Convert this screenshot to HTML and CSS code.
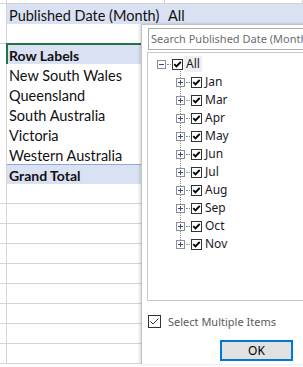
FILE: index.html
```html
<!DOCTYPE html>
<html>
<head>
<meta charset="utf-8">
<link rel="stylesheet" href="styles.css">
</head>
<body>
<div class="sheet">
  <div class="row r0"><div class="c a"></div><div class="c b"></div><div class="c cc"></div></div>
  <div class="row band"><div class="c a"></div><div class="c b">Published Date (Month)</div><div class="c cc">All</div></div>
  <div class="row pv"><div class="c a"></div><div class="c b"></div><div class="c cc"></div></div>
  <div class="row pv head"><div class="c a"></div><div class="c b sel">Row Labels</div><div class="c cc"></div></div>
  <div class="row pv"><div class="c a"></div><div class="c b">New South Wales</div><div class="c cc"></div></div>
  <div class="row pv"><div class="c a"></div><div class="c b">Queensland</div><div class="c cc"></div></div>
  <div class="row pv"><div class="c a"></div><div class="c b">South Australia</div><div class="c cc"></div></div>
  <div class="row pv"><div class="c a"></div><div class="c b">Victoria</div><div class="c cc"></div></div>
  <div class="row pv"><div class="c a"></div><div class="c b">Western Australia</div><div class="c cc"></div></div>
  <div class="row pv total"><div class="c a"></div><div class="c b">Grand Total</div><div class="c cc"></div></div>
  <div class="row"><div class="c a"></div><div class="c b"></div><div class="c cc"></div></div>
  <div class="row"><div class="c a"></div><div class="c b"></div><div class="c cc"></div></div>
  <div class="row"><div class="c a"></div><div class="c b"></div><div class="c cc"></div></div>
  <div class="row"><div class="c a"></div><div class="c b"></div><div class="c cc"></div></div>
  <div class="row"><div class="c a"></div><div class="c b"></div><div class="c cc"></div></div>
  <div class="row"><div class="c a"></div><div class="c b"></div><div class="c cc"></div></div>
  <div class="row"><div class="c a"></div><div class="c b"></div><div class="c cc"></div></div>
  <div class="row"><div class="c a"></div><div class="c b"></div><div class="c cc"></div></div>
  <div class="row"><div class="c a"></div><div class="c b"></div><div class="c cc"></div></div>
</div>

<div class="popup">
  <div class="search">Search Published Date (Month)</div>
  <div class="tree">
    <div class="node root">
      <svg class="exp" width="9" height="9" viewBox="0 0 9 9"><rect x="0.5" y="0.5" width="8" height="8" fill="#fff" stroke="#8f8f8f"/><path d="M2 4.5H7" stroke="#2b4d9c" stroke-width="1"/></svg>
      <span class="dash"></span>
      <svg class="cb" width="11" height="11" viewBox="0 0 11 11"><rect x="0.5" y="0.5" width="10" height="10" fill="#fff" stroke="#333"/><path d="M2.3 5.2L4.4 7.4L8.7 3" fill="none" stroke="#000" stroke-width="1.8"/></svg>
      <span class="label focus">All</span>
    </div>
    <div class="children">
      <div class="node"><svg class="exp" width="9" height="9" viewBox="0 0 9 9"><rect x="0.5" y="0.5" width="8" height="8" fill="#fff" stroke="#8f8f8f"/><path d="M2 4.5H7M4.5 2V7" stroke="#2b4d9c" stroke-width="1"/></svg><span class="dash"></span><svg class="cb" width="11" height="11" viewBox="0 0 11 11"><rect x="0.5" y="0.5" width="10" height="10" fill="#fff" stroke="#333"/><path d="M2.3 5.2L4.4 7.4L8.7 3" fill="none" stroke="#000" stroke-width="1.8"/></svg><span class="label">Jan</span></div>
      <div class="node"><svg class="exp" width="9" height="9" viewBox="0 0 9 9"><rect x="0.5" y="0.5" width="8" height="8" fill="#fff" stroke="#8f8f8f"/><path d="M2 4.5H7M4.5 2V7" stroke="#2b4d9c" stroke-width="1"/></svg><span class="dash"></span><svg class="cb" width="11" height="11" viewBox="0 0 11 11"><rect x="0.5" y="0.5" width="10" height="10" fill="#fff" stroke="#333"/><path d="M2.3 5.2L4.4 7.4L8.7 3" fill="none" stroke="#000" stroke-width="1.8"/></svg><span class="label">Mar</span></div>
      <div class="node"><svg class="exp" width="9" height="9" viewBox="0 0 9 9"><rect x="0.5" y="0.5" width="8" height="8" fill="#fff" stroke="#8f8f8f"/><path d="M2 4.5H7M4.5 2V7" stroke="#2b4d9c" stroke-width="1"/></svg><span class="dash"></span><svg class="cb" width="11" height="11" viewBox="0 0 11 11"><rect x="0.5" y="0.5" width="10" height="10" fill="#fff" stroke="#333"/><path d="M2.3 5.2L4.4 7.4L8.7 3" fill="none" stroke="#000" stroke-width="1.8"/></svg><span class="label">Apr</span></div>
      <div class="node"><svg class="exp" width="9" height="9" viewBox="0 0 9 9"><rect x="0.5" y="0.5" width="8" height="8" fill="#fff" stroke="#8f8f8f"/><path d="M2 4.5H7M4.5 2V7" stroke="#2b4d9c" stroke-width="1"/></svg><span class="dash"></span><svg class="cb" width="11" height="11" viewBox="0 0 11 11"><rect x="0.5" y="0.5" width="10" height="10" fill="#fff" stroke="#333"/><path d="M2.3 5.2L4.4 7.4L8.7 3" fill="none" stroke="#000" stroke-width="1.8"/></svg><span class="label">May</span></div>
      <div class="node"><svg class="exp" width="9" height="9" viewBox="0 0 9 9"><rect x="0.5" y="0.5" width="8" height="8" fill="#fff" stroke="#8f8f8f"/><path d="M2 4.5H7M4.5 2V7" stroke="#2b4d9c" stroke-width="1"/></svg><span class="dash"></span><svg class="cb" width="11" height="11" viewBox="0 0 11 11"><rect x="0.5" y="0.5" width="10" height="10" fill="#fff" stroke="#333"/><path d="M2.3 5.2L4.4 7.4L8.7 3" fill="none" stroke="#000" stroke-width="1.8"/></svg><span class="label">Jun</span></div>
      <div class="node"><svg class="exp" width="9" height="9" viewBox="0 0 9 9"><rect x="0.5" y="0.5" width="8" height="8" fill="#fff" stroke="#8f8f8f"/><path d="M2 4.5H7M4.5 2V7" stroke="#2b4d9c" stroke-width="1"/></svg><span class="dash"></span><svg class="cb" width="11" height="11" viewBox="0 0 11 11"><rect x="0.5" y="0.5" width="10" height="10" fill="#fff" stroke="#333"/><path d="M2.3 5.2L4.4 7.4L8.7 3" fill="none" stroke="#000" stroke-width="1.8"/></svg><span class="label">Jul</span></div>
      <div class="node"><svg class="exp" width="9" height="9" viewBox="0 0 9 9"><rect x="0.5" y="0.5" width="8" height="8" fill="#fff" stroke="#8f8f8f"/><path d="M2 4.5H7M4.5 2V7" stroke="#2b4d9c" stroke-width="1"/></svg><span class="dash"></span><svg class="cb" width="11" height="11" viewBox="0 0 11 11"><rect x="0.5" y="0.5" width="10" height="10" fill="#fff" stroke="#333"/><path d="M2.3 5.2L4.4 7.4L8.7 3" fill="none" stroke="#000" stroke-width="1.8"/></svg><span class="label">Aug</span></div>
      <div class="node"><svg class="exp" width="9" height="9" viewBox="0 0 9 9"><rect x="0.5" y="0.5" width="8" height="8" fill="#fff" stroke="#8f8f8f"/><path d="M2 4.5H7M4.5 2V7" stroke="#2b4d9c" stroke-width="1"/></svg><span class="dash"></span><svg class="cb" width="11" height="11" viewBox="0 0 11 11"><rect x="0.5" y="0.5" width="10" height="10" fill="#fff" stroke="#333"/><path d="M2.3 5.2L4.4 7.4L8.7 3" fill="none" stroke="#000" stroke-width="1.8"/></svg><span class="label">Sep</span></div>
      <div class="node"><svg class="exp" width="9" height="9" viewBox="0 0 9 9"><rect x="0.5" y="0.5" width="8" height="8" fill="#fff" stroke="#8f8f8f"/><path d="M2 4.5H7M4.5 2V7" stroke="#2b4d9c" stroke-width="1"/></svg><span class="dash"></span><svg class="cb" width="11" height="11" viewBox="0 0 11 11"><rect x="0.5" y="0.5" width="10" height="10" fill="#fff" stroke="#333"/><path d="M2.3 5.2L4.4 7.4L8.7 3" fill="none" stroke="#000" stroke-width="1.8"/></svg><span class="label">Oct</span></div>
      <div class="node"><svg class="exp" width="9" height="9" viewBox="0 0 9 9"><rect x="0.5" y="0.5" width="8" height="8" fill="#fff" stroke="#8f8f8f"/><path d="M2 4.5H7M4.5 2V7" stroke="#2b4d9c" stroke-width="1"/></svg><span class="dash"></span><svg class="cb" width="11" height="11" viewBox="0 0 11 11"><rect x="0.5" y="0.5" width="10" height="10" fill="#fff" stroke="#333"/><path d="M2.3 5.2L4.4 7.4L8.7 3" fill="none" stroke="#000" stroke-width="1.8"/></svg><span class="label">Nov</span></div>
    </div>
  </div>
  <div class="multi">
    <svg class="mcb" width="13" height="13" viewBox="0 0 13 13"><rect x="0.5" y="0.5" width="12" height="12" fill="#fff" stroke="#333"/><path d="M2.5 6.5L5 9L10.5 3.5" fill="none" stroke="#333" stroke-width="1"/></svg>
    <span class="mlabel">Select Multiple Items</span>
  </div>
  <div class="footer"><button class="ok">OK</button></div>
</div>
</body>
</html>
```

FILE: styles.css
```css
html, body {
  margin: 0;
  padding: 0;
  background: #fff;
  overflow: hidden;
  width: 303px;
  height: 367px;
}

.sheet {
  font-family: Lato, "Liberation Sans", sans-serif;
  font-size: 14.5px;
  color: #111;
}

.row {
  display: grid;
  grid-template-columns: 7px 158px 1fr;
  height: 20px;
}

.r0 {
  height: 4px;
}

.c {
  box-sizing: border-box;
  border-right: 1px solid #d4d4d4;
  border-bottom: 1px solid #d4d4d4;
  padding: 2px 0 0 2px;
  line-height: 19px;
  white-space: nowrap;
  background: #fff;
}

.a,
.r0 .c {
  padding: 0;
}

.band .b,
.band .cc {
  background: #d9e1f2;
  border-color: #d9e1f2;
}

.band .cc {
  padding-left: 3px;
}

.pv .b {
  border-bottom-color: #fff;
  border-right-color: #fff;
}

.head .b,
.total .b {
  background: #d9e1f2;
  font-weight: bold;
  font-size: 14px;
}

.head .b {
  border-bottom-color: #d9e1f2;
}

.sel {
  outline: 2px solid #217346;
  outline-offset: -1px;
}

.total .b {
  border-top: 1px solid #8ea9db;
  border-bottom-color: #d9e1f2;
  padding-top: 1px;
}

/* popup */
.popup {
  position: absolute;
  left: 141px;
  top: 24px;
  width: 180px;
  height: 340px;
  box-sizing: border-box;
  background: #fff;
  border-left: 1px solid #c4c4c4;
  border-top: 1px solid #c4c4c4;
  box-shadow: -1px 0 3px rgba(0, 0, 0, 0.18);
  padding: 3px 0 0 6px;
  font-family: "Noto Sans", "Open Sans", sans-serif;
  font-size: 11px;
}

.search {
  height: 22px;
  width: 190px;
  box-sizing: border-box;
  border: 1px solid #acacac;
  padding-left: 2px;
  line-height: 19px;
  color: #6d6d6d;
  white-space: nowrap;
  overflow: hidden;
  font-size: 11px;
}

.tree {
  margin-top: 2px;
  margin-left: -1px;
  height: 249px;
  width: 190px;
  box-sizing: border-box;
  border: 1px solid #c8c8c8;
  padding-top: 2px;
  color: #1a1a2a;
}

.node {
  display: flex;
  align-items: center;
  height: 18px;
  padding-left: 28px;
}

.root {
  padding-left: 9px;
}

.exp {
  display: block;
  flex: none;
  shape-rendering: crispEdges;
}

.dash {
  width: 4px;
  height: 0;
  margin: 0 1px;
  border-top: 1px dotted #8c8c8c;
}

.cb {
  display: block;
  flex: none;
}

.label {
  margin-left: 1px;
  padding: 0 2px;
  line-height: 16px;
  font-size: 12px;
}

.focus {
  background: #efefef;
}

.children {
  position: relative;
}

.children::before {
  content: "";
  position: absolute;
  left: 32px;
  top: -2px;
  bottom: 9px;
  border-left: 1px dotted #8c8c8c;
}

.children .exp {
  position: relative;
}

.multi {
  display: flex;
  align-items: center;
  gap: 7px;
  margin-top: 14px;
  height: 13px;
}

.mcb {
  display: block;
  flex: none;
}

.mlabel {
  color: #5a5a5a;
  font-size: 11px;
  line-height: 13px;
}

.footer {
  margin-top: 12px;
  padding-left: 72px;
}

.ok {
  display: block;
  width: 73px;
  height: 21px;
  box-sizing: border-box;
  border: 2px solid #0078d7;
  background: #e1e1e1;
  font-family: "Noto Sans", "Open Sans", sans-serif;
  font-size: 12px;
  color: #000;
  padding: 0;
  line-height: 17px;
}
```
